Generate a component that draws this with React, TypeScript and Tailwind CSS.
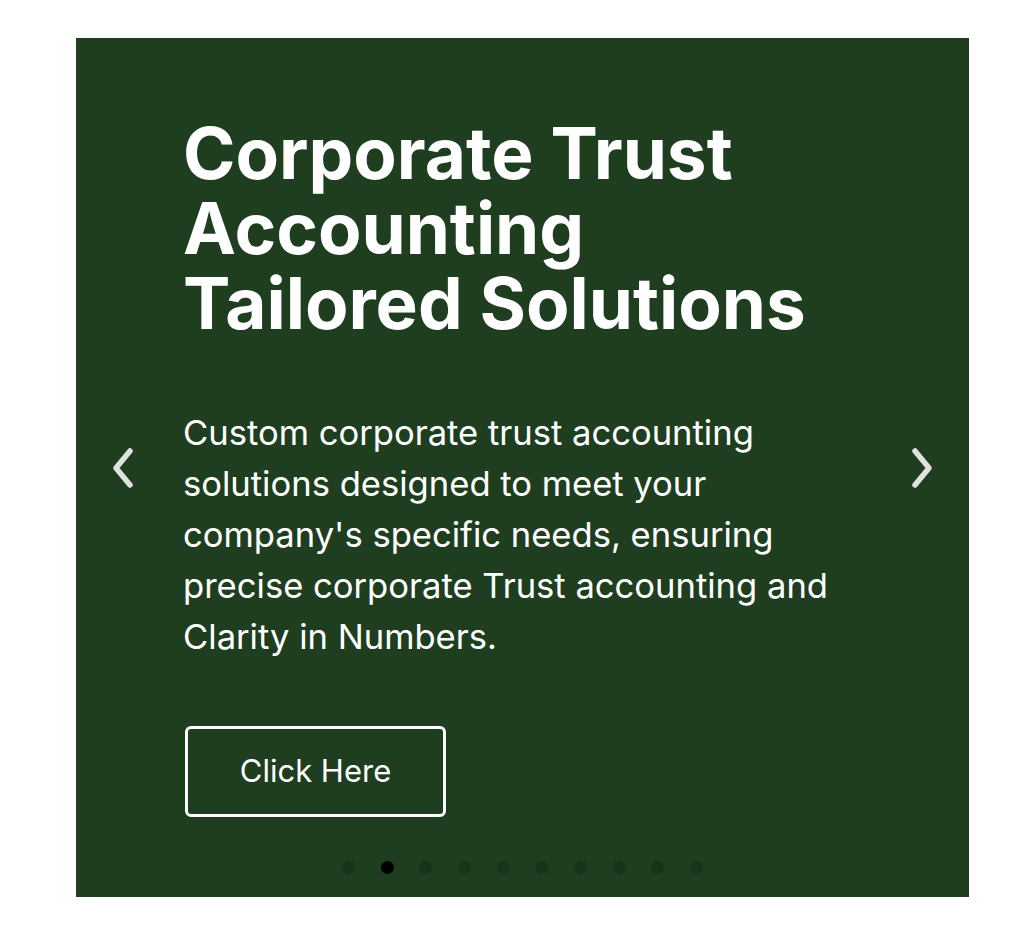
import React, { useState } from "react";

const slideCount = 10;

const Chevron: React.FC<{ dir: "left" | "right" }> = ({ dir }) => (
  <svg width="28" height="44" viewBox="0 0 28 44" fill="none">
    <path
      d={dir === "left" ? "M21 5 L7 22 L21 39" : "M7 5 L21 22 L7 39"}
      stroke="#e0e2e0"
      strokeWidth="5.5"
      strokeLinecap="round"
      strokeLinejoin="round"
    />
  </svg>
);

const App: React.FC = () => {
  const [active, setActive] = useState(1);

  return (
    <div className="min-h-screen bg-white pt-[38px] pl-[76px]" style={{ fontFamily: "Inter, 'Noto Sans', sans-serif" }}>
      <section className="relative flex flex-col w-[893px] h-[859px] bg-[#1e3e1f] text-white">
        {/* slide content */}
        <div className="flex-1 flex flex-col items-start pl-[107px] pr-[60px] pt-[78px]">
          <h1 className="text-[71px] leading-[75px] font-bold">
            Corporate Trust
            <br />
            Accounting
            <br />
            Tailored Solutions
          </h1>
          <p className="mt-[66px] text-[34.6px] leading-[51px] w-[672px]">
            Custom corporate trust accounting solutions designed to meet your company's specific
            needs, ensuring precise corporate Trust accounting and Clarity in Numbers.
          </p>
          <button className="mt-[64px] ml-[2px] w-[261px] h-[91px] border-[3px] border-white rounded-[6px] text-[31px]">
            Click Here
          </button>
        </div>

        {/* pager dots */}
        <div className="flex justify-center gap-[25.7px] pb-[23px]">
          {Array.from({ length: slideCount }).map((_, i) => (
            <span
              key={i}
              onClick={() => setActive(i)}
              className={`block w-[13px] h-[13px] rounded-full ${i === active ? "bg-black" : "bg-[#173318]"}`}
            />
          ))}
        </div>

        {/* prev / next */}
        <button
          className="absolute left-[33px] top-1/2 -translate-y-1/2"
          onClick={() => setActive((active + slideCount - 1) % slideCount)}
        >
          <Chevron dir="left" />
        </button>
        <button
          className="absolute right-[33px] top-1/2 -translate-y-1/2"
          onClick={() => setActive((active + 1) % slideCount)}
        >
          <Chevron dir="right" />
        </button>
      </section>
    </div>
  );
};

export default App;
